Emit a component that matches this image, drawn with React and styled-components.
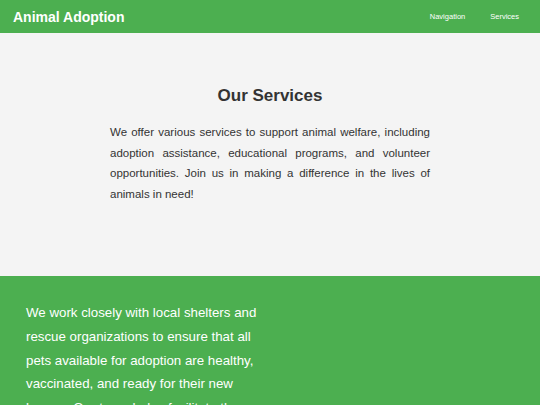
import React from 'react';
import styled, { createGlobalStyle } from 'styled-components';

const GlobalStyle = createGlobalStyle`
    body {
        margin: 0;
        font-family: "Liberation Sans", Arial, sans-serif;
        background: #f4f4f4;
        color: #333;
    }
`;

const Header = styled.header`
    display: flex;
    align-items: center;
    justify-content: space-between;
    height: 33px;
    padding: 0 21px 0 13px;
    background-color: #4caf50;
    color: #fff;
`;

const Title = styled.h1`
    margin: 0;
    font-size: 14px;
    font-weight: bold;
`;

const Nav = styled.nav`
    display: flex;
    gap: 25px;
`;

const NavLink = styled.a`
    color: #fff;
    font-size: 7.5px;
    text-decoration: none;
`;

const Services = styled.section`
    padding: 53px 0 72px;
    background-color: #f4f4f4;
`;

const Heading = styled.h2`
    margin: 0 0 16px;
    text-align: center;
    font-size: 17px;
    font-weight: bold;
    color: #333;
`;

const Paragraph = styled.p`
    width: 320px;
    margin: 0 auto;
    font-size: 11.5px;
    line-height: 20.6px;
    text-align: justify;
    color: #333;
`;

const Partners = styled.section`
    padding: 25px 26px;
    background-color: #4caf50;
    color: #fff;
`;

const PartnerText = styled.p`
    width: 234px;
    margin: 0;
    font-size: 13.3px;
    line-height: 23.6px;
`;

export default function App() {
    return (
        <>
            <GlobalStyle />
            <Header>
                <Title>Animal Adoption</Title>
                <Nav>
                    <NavLink href="#">Navigation</NavLink>
                    <NavLink href="#">Services</NavLink>
                </Nav>
            </Header>
            <Services>
                <Heading>Our Services</Heading>
                <Paragraph>
                    We offer various services to support animal welfare, including adoption assistance,
                    educational programs, and volunteer opportunities. Join us in making a difference in
                    the lives of animals in need!
                </Paragraph>
            </Services>
            <Partners>
                <PartnerText>
                    We work closely with local shelters and rescue organizations to ensure that all pets
                    available for adoption are healthy, vaccinated, and ready for their new homes. Our
                    team helps facilitate the adoption process and provides ongoing support to adopters.
                </PartnerText>
            </Partners>
        </>
    );
}
